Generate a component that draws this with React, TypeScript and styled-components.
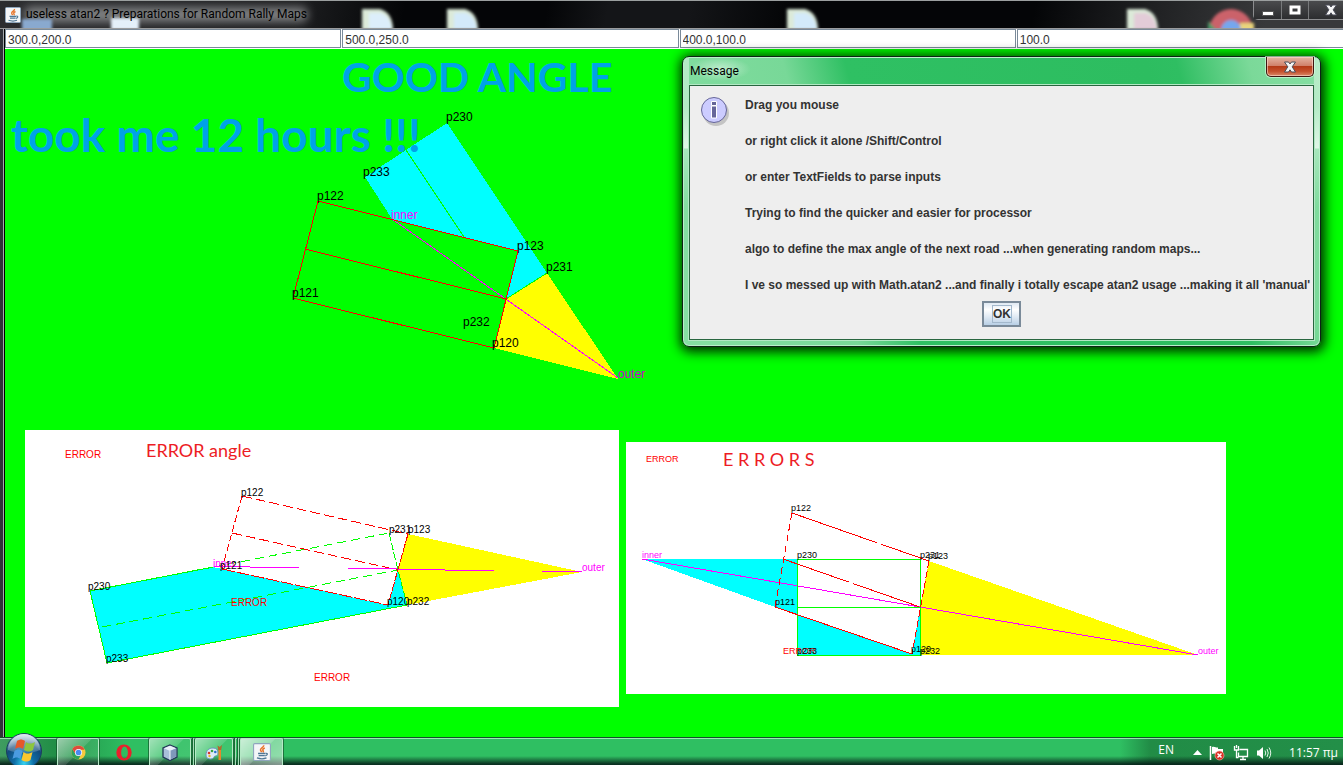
import React from 'react';
import styled, { createGlobalStyle } from 'styled-components';

const ui = "'Open Sans', 'Noto Sans', sans-serif";
const captionFont = "Roboto, 'Open Sans', sans-serif";
const arial = "'Liberation Sans', Arial, sans-serif";
const lato = "Lato, 'Open Sans', sans-serif";

const GlobalStyle = createGlobalStyle`
  *, *::before, *::after { box-sizing: border-box; }
  html, body { margin: 0; padding: 0; background: #000; }
  h1, h2, p { margin: 0; }
  button, input { margin: 0; font: inherit; }
`;

const Desktop = styled.div`
  min-height: 100vh;
  display: flex;
  flex-direction: column;
  overflow: hidden;
`;

const AppWindow = styled.main`
  flex: 1;
  display: flex;
  flex-direction: column;
`;

const TitleBar = styled.header`
  position: relative;
  display: flex;
  align-items: center;
  height: 29px;
  padding-left: 5px;
  border-top: 1px solid #9b9f9f;
  border-bottom: 1px solid #9a9c9e;
  background: linear-gradient(100deg, #2c2d30 0, #1b1c1e 300px, #040507 400px, #040507 540px, #141518 600px, #141518 680px, #040507 780px, #040507 1020px, #1c1d1f 1120px, #38393b 1250px, #38393b 100%);
  overflow: hidden;
`;

const Backdrop = styled.svg`
  position: absolute;
  left: 0;
  top: 0;
  width: 1343px;
  height: 27px;
`;

const Caption = styled.h1`
  position: relative;
  padding: 0 8px 2px 5px;
  font: 12px/22px ${captionFont};
  color: #000;
  white-space: nowrap;
`;

const TitleIcon = styled.span`
  position: relative;
  display: flex;
`;

const WindowButtons = styled.div`
  position: absolute;
  top: 0;
  right: -10px;
  display: flex;
  height: 19px;
  border: 1px solid #8c8d8f;
  border-top: 0;
  border-radius: 0 0 0 5px;
`;

const WindowButton = styled.button<{ $wide?: boolean }>`
  display: flex;
  align-items: center;
  justify-content: center;
  width: ${(p) => (p.$wide ? 44 : 27)}px;
  padding: 0 0 1px;
  border: 0;
  border-left: 1px solid #77797b;
  background: linear-gradient(#4a4b4d, #2c2d2f);
  &:first-child { border-left: 0; }
`;

const Client = styled.div`
  flex: 1;
  display: flex;
  flex-direction: column;
  padding-left: 5px;
  background: linear-gradient(90deg, #303338 0, #303338 3px, #a5a9ac 3px, #a5a9ac 4px, #000 4px, #000 5px);
`;

const Fields = styled.form`
  display: grid;
  grid-template-columns: repeat(4, 1fr);
  gap: 1px;
  height: 20px;
  margin-right: -10px;
  padding-bottom: 1px;
  background: #fff;
`;

const Field = styled.input`
  width: 100%;
  min-width: 0;
  height: 19px;
  padding: 2px 2px 0;
  border: 1px solid #7a8a99;
  border-radius: 0;
  outline: 0;
  background: #fff;
  color: #333;
  font: 12px/16px ${arial};
`;

const Stage = styled.section`
  position: relative;
  flex: 1;
  padding-bottom: 30px;
  background: #0f0;
`;

const Drawing = styled.svg`
  display: block;
  flex: none;
  line, polygon, polyline { shape-rendering: crispEdges; }
`;

const Note = styled.h2<{ $left: number; $top: number; $size: number }>`
  position: absolute;
  left: ${(p) => p.$left}px;
  top: ${(p) => p.$top}px;
  font: bold ${(p) => p.$size}px/52px ${lato};
  color: #00a2e8;
  white-space: nowrap;
`;

const Figures = styled.div`
  display: flex;
  align-items: center;
  gap: 7px;
  padding-left: 20px;
`;

const Label = styled.text<{ $size: number; $color?: string }>`
  font: ${(p) => p.$size}px ${arial};
  fill: ${(p) => p.$color || '#000'};
`;

const FigureTitle = styled.text`
  font: 18px ${lato};
  fill: #ed1c24;
`;

const Dialog = styled.section`
  position: absolute;
  left: 677px;
  top: 7px;
  width: 639px;
  padding: 0 6px 6px;
  border: 1px solid #0c2415;
  border-radius: 7px;
  background:
    linear-gradient(rgba(255,255,255,0.4) 0, rgba(255,255,255,0.4) 50px, rgba(255,255,255,0.75) 91px, rgba(255,255,255,0.3) 92px, rgba(255,255,255,0) 150px) 0 0 / 6px 100% no-repeat,
    linear-gradient(rgba(255,255,255,0.4) 0, rgba(255,255,255,0.4) 50px, rgba(255,255,255,0.75) 91px, rgba(255,255,255,0.3) 92px, rgba(255,255,255,0) 150px) 100% 0 / 6px 100% no-repeat,
    linear-gradient(75deg, #86dfa3 0, #78d898 170px, #2fc063 230px, #2dbd60 520px, #2fbe62 550px, #7bd999 620px, #86dfa3 100%);
  box-shadow: inset 0 0 0 1px #b9f0cb, 1px 2px 12px 3px rgba(0, 20, 0, 0.9);
`;

const DialogHeader = styled.header`
  display: flex;
  justify-content: space-between;
  align-items: flex-start;
  height: 28px;
`;

const DialogTitle = styled.h2`
  padding: 4px 12px 0 1px;
  font: 12px/20px ${captionFont};
  color: #000;
  background: radial-gradient(ellipse at center, rgba(255,255,255,0.5), rgba(255,255,255,0) 70%);
`;

const CloseButton = styled.button`
  display: flex;
  align-items: center;
  justify-content: center;
  width: 48px;
  height: 20px;
  padding: 0;
  border: 1px solid #3f1510;
  border-top: 0;
  border-radius: 0 0 5px 5px;
  background: linear-gradient(#e5b5a4 0, #cf7e68 48%, #b43a18 50%, #c5502c 75%, #d98a68 100%);
  box-shadow: inset 0 0 0 1px rgba(255,220,205,0.6), 0 0 0 1px rgba(220,255,230,0.6);
`;

const DialogBody = styled.div`
  display: flex;
  flex-direction: column;
  align-items: center;
  padding: 10px 10px 12px;
  border: 1px solid #28663f;
  outline: 1px solid #b2e8c4;
  background: #eee;
`;

const MessageRow = styled.div`
  display: flex;
  align-self: stretch;
  gap: 15px;
  svg { flex: none; }
`;

const Lines = styled.div`
  display: flex;
  flex-direction: column;
  gap: 18px;
  font: bold 12px/18px ${arial};
  color: #333;
  white-space: nowrap;
`;

const OkButton = styled.button`
  width: 39px;
  height: 26px;
  margin-top: 7px;
  padding: 2px 0 2px 8px;
  border: 2px solid #7a8a99;
  background: linear-gradient(#dfe9f3 0, #fff 30%, #e3ecf5 60%, #b8cfe5 100%);
  font: bold 12px/16px ${arial};
  color: #333;
  display: flex;
  align-items: center;
`;

const OkFocus = styled.span`
  width: 20px;
  border: 1px solid #a3b8cc;
`;

const Taskbar = styled.footer`
  position: relative;
  display: flex;
  align-items: stretch;
  height: 28px;
  padding-left: 57px;
  border-top: 1px solid #14502b;
  background:
    linear-gradient(rgba(180,240,200,0.8) 0, rgba(180,240,200,0.8) 1px, rgba(0,0,0,0) 1px, rgba(0,0,0,0) 18px, rgba(4,24,22,0.85) 26px),
    linear-gradient(90deg, #3f9c60 0, #218e46 55px, #2fbf62 130px, #2fbf62 1120px, #218c46 1150px, #238f48 100%);
`;

const StartButton = styled.button`
  position: absolute;
  left: 5px;
  top: -6px;
  width: 38px;
  height: 38px;
  padding: 0;
  border: 0;
  background: none;
`;

const TaskButton = styled.button<{ $look: 'plain' | 'open' | 'active'; $width: number; $gap: number }>`
  display: flex;
  align-items: center;
  justify-content: center;
  width: ${(p) => p.$width}px;
  margin-right: ${(p) => p.$gap}px;
  padding: 0;
  border: 1px solid ${(p) => (p.$look === 'plain' ? 'transparent' : '#b5e9c6')};
  border-bottom: 0;
  border-radius: 2px 2px 0 0;
  background: ${(p) =>
    p.$look === 'plain'
      ? 'none'
      : p.$look === 'open'
        ? 'linear-gradient(135deg, rgba(255,255,255,0.55), rgba(255,255,255,0.2) 50%, rgba(255,255,255,0.08) 52%, rgba(255,255,255,0.1))'
        : 'linear-gradient(135deg, rgba(255,255,255,0.75), rgba(255,255,255,0.5) 50%, rgba(255,255,255,0.4) 52%, rgba(255,255,255,0.5))'};
  box-shadow: ${(p) => (p.$look === 'plain' ? 'none' : '0 0 0 1px rgba(15,70,35,0.6)')};
`;

const StackEdge = styled.span`
  width: 2px;
  margin-right: 1px;
  border-right: 1px solid #a8dcb9;
  border-left: 1px solid #1b6a38;
`;

const Tray = styled.div`
  display: flex;
  align-items: center;
  margin-left: auto;
  padding: 2px 5px 0 0;
  color: #fff;
  font: 12px/20px ${ui};
  white-space: nowrap;
`;

const Language = styled.span`
  padding: 0 19px 5px 0;
`;

const Clock = styled.time`
  padding-left: 17px;
`;

const TrayIcons = styled.div`
  display: flex;
  align-items: center;
  gap: 7px;
`;

const JavaIcon = ({ size }: { size: number }) => (
  <svg width={size} height={size} viewBox="0 0 16 16" aria-hidden="true">
    <rect x="0.5" y="0.5" width="15" height="15" rx="1" fill="#f4f6f8" stroke="#8fa6bd" />
    <path d="M9.500 2c.5 1.800-2.800 2.300-2.800 4 0 1 .8 1.400.9 2.200M10.500 4.500c-1.800.7-2.200 1.600-1.500 2.400.4.500.2 1-.2 1.400" fill="none" stroke="#e8762c" strokeWidth="1.400" />
    <path d="M4.500 9.300h6.500M5 11.200h5.500M3.500 13.300c2.500.8 6.500.8 8.500 0M11.300 9.200c2-.3 1.900 1.800-.4 2.100" fill="none" stroke="#4f7896" strokeWidth="1.200" />
  </svg>
);

const CrossIcon = () => (
  <svg width="14" height="12" viewBox="0 0 14 12" aria-hidden="true">
    <path d="M1.500 1h4L7 3l1.500-2h4L9.200 5.800 12.500 11h-4L7 8.800 5.500 11h-4l3.300-5.200z" fill="#f5f5f5" stroke="#4a4c58" strokeWidth="1" />
  </svg>
);

const DocGhost = ({ x, tint }: { x: number; tint: string }) => (
  <g filter="url(#soft)">
    <path d={`M${x} 8h18q13 4 13 21h-31z`} fill="#dcead9" />
    <path d={`M${x + 7} 12h12q10 4 11 17h-23z`} fill={tint} />
  </g>
);

const GlassBackdrop = () => (
  <Backdrop aria-hidden="true" viewBox="0 0 1343 27">
    <defs>
      <filter id="soft" x="-20%" y="-20%" width="140%" height="140%"><feGaussianBlur stdDeviation="1.500" /></filter>
      <filter id="glow" x="-10%" y="-60%" width="120%" height="220%"><feGaussianBlur stdDeviation="5" /></filter>
    </defs>
    <rect x="24" y="6" width="284" height="15" rx="7" fill="#96989a" opacity="0.8" filter="url(#glow)" />
    <path d="M22 18h30v12H22z" fill="#89a9cf" filter="url(#soft)" />
    <path d="M111 17h28v12h-28z" fill="#e4f0fa" filter="url(#soft)" />
    <DocGhost x={362} tint="#dceefb" />
    <DocGhost x={447} tint="#d3eafa" />
    <DocGhost x={787} tint="#d3eafa" />
    <DocGhost x={1127} tint="#e3ccd8" />
    <g filter="url(#soft)">
      <circle cx="1231" cy="30" r="22" fill="#cb626a" />
      <path d="M1208 20l13 14h-13z" fill="#459a67" />
      <path d="M1240 22h14v12h-14z" fill="#e8d47c" />
      <circle cx="1231" cy="29" r="10" fill="#74a7ee" />
    </g>
  </Backdrop>
);

type Mark = [string, number, number, string?];

const Marks = ({ items, size }: { items: Mark[]; size: number }) => (
  <>
    {items.map(([text, x, y, color], i) => (
      <Label key={i} x={x} y={y} $size={size} $color={color}>{text}</Label>
    ))}
  </>
);

const pink = '#f0f';
const red = '#f00';

const goodMarks: Mark[] = [
  ['p230', 446, 121], ['p233', 363, 176], ['p122', 317, 200], ['inner', 391, 219, pink],
  ['p123', 517, 250], ['p231', 546, 271], ['p121', 292, 297], ['p232', 463, 326],
  ['p120', 492, 347], ['outer', 618, 378, '#c0c'],
];

const angleMarks: Mark[] = [
  ['ERROR', 65, 458, red], ['p122', 241, 496], ['p231', 389, 533], ['p123', 408, 533],
  ['inner', 213, 567, pink], ['p121', 220, 569], ['p230', 88, 590], ['p233', 106, 662],
  ['p120', 387, 605], ['p232', 407, 605], ['outer', 582, 571, pink],
  ['ERROR', 231, 606, red], ['ERROR', 314, 681, red],
];

const errorMarks: Mark[] = [
  ['ERROR', 646, 462, red], ['p122', 791, 511], ['p230', 797, 558], ['p231', 920, 558],
  ['p123', 928, 559], ['inner', 642, 558, pink], ['p121', 775, 605], ['ERROR', 783, 654, red],
  ['p233', 797, 654], ['p120', 911, 652], ['p232', 920, 654], ['outer', 1198, 654, pink],
];

const GoodAngle = () => (
  <Drawing width="660" height="381" viewBox="5 49 660 381" role="img" aria-label="Good angle">
    <polygon points="447,123 547,273 506,299 518,251 392,219 365,177" fill="#0ff" />
    <polygon points="506,299 547,273 618,379 494,348" fill="#ff0" />
    <g stroke="#0f0"><line x1="406" y1="150" x2="464" y2="237" /><line x1="506" y1="299" x2="547" y2="273" /></g>
    <line x1="392" y1="219" x2="618" y2="378" stroke="#f0f" />
    <g stroke="#f00" fill="none">
      <polygon points="318,201 518,251 494,348 293,298" />
      <line x1="305" y1="249" x2="506" y2="299" />
    </g>
    <Marks items={goodMarks} size={12} />
  </Drawing>
);

const ErrorAngle = () => (
  <Drawing width="594" height="277" viewBox="25 430 594 277" role="img" aria-label="Error angle">
    <rect x="25" y="430" width="594" height="277" fill="#fff" />
    <polygon points="90,591 213,567 222,569 388,605 398,570 407,605 107,663" fill="#0ff" />
    <polygon points="398,570 408,534 582,572 407,605" fill="#ff0" />
    <g stroke="#0f0" fill="none" strokeDasharray="9 5">
      <line x1="90" y1="591" x2="389" y2="533" />
      <line x1="102" y1="627" x2="398" y2="570" />
    </g>
    <g stroke="#0f0" fill="none">
      <polyline points="213,567 90,591 107,663 407,605" />
      <polyline points="389,533 398,570 407,605" strokeDasharray="8 2" />
    </g>
    <g stroke="#f00" fill="none">
      <line x1="242" y1="496" x2="408" y2="534" strokeDasharray="10 4" />
      <line x1="232" y1="533" x2="398" y2="570" strokeDasharray="10 4" />
      <line x1="222" y1="569" x2="388" y2="605" strokeDasharray="13 2" />
      <line x1="242" y1="496" x2="222" y2="569" strokeDasharray="7 3" />
      <line x1="408" y1="534" x2="388" y2="605" strokeDasharray="9 1" />
    </g>
    <g stroke="#f0f">
      <line x1="214" y1="566.500" x2="250" y2="566.500" />
      <line x1="250" y1="567.500" x2="299" y2="567.500" />
      <line x1="348" y1="568.500" x2="397" y2="568.500" />
      <line x1="398" y1="569.500" x2="445" y2="569.500" />
      <line x1="445" y1="570.500" x2="494" y2="570.500" />
      <line x1="542" y1="571.500" x2="582" y2="571.500" />
    </g>
    <Marks items={angleMarks} size={10} />
    <FigureTitle x="146" y="457">ERROR angle</FigureTitle>
  </Drawing>
);

const Errors = () => (
  <Drawing width="600" height="253" viewBox="626 442 600 253" role="img" aria-label="Errors">
    <rect x="626" y="442" width="600" height="252" fill="#fff" />
    <polygon points="642,559 797,559 797,614 775,607" fill="#0ff" />
    <polygon points="797,614 912,654 920,607 921,655 797,655" fill="#0ff" />
    <polygon points="920,607 929,561 1198,655 921,655" fill="#ff0" />
    <line x1="642" y1="559" x2="1198" y2="655" stroke="#f0f" />
    <g stroke="#0f0" fill="none">
      <polygon points="797.500,559.500 920.500,559.500 920.500,655.500 797.500,655.500" />
      <line x1="797" y1="607.500" x2="921" y2="607.500" />
    </g>
    <g stroke="#f00" fill="none">
      <line x1="792" y1="513" x2="929" y2="561" strokeDasharray="90 4" />
      <line x1="783" y1="559" x2="920" y2="607" strokeDasharray="70 4" />
      <line x1="775" y1="607" x2="912" y2="654" />
      <line x1="792" y1="513" x2="775" y2="607" strokeDasharray="7 4" />
      <line x1="929" y1="561" x2="912" y2="654" strokeDasharray="7 3" />
    </g>
    <Marks items={errorMarks} size={9} />
    <FigureTitle x="723" y="466">E R R O R S</FigureTitle>
  </Drawing>
);

const InfoIcon = () => (
  <svg width="30" height="32" viewBox="0 0 30 32" aria-hidden="true">
    <circle cx="16" cy="17" r="13" fill="#999" opacity="0.5" />
    <circle cx="14" cy="14" r="12.500" fill="#ccf" stroke="#669" />
    <path d="M11.500 5.500h5v4h-5zM11.500 10h5v12h-5z" fill="#669" stroke="#fff" />
  </svg>
);

const StartOrb = () => (
  <svg width="38" height="38" viewBox="0 0 38 38" aria-hidden="true">
    <defs>
      <radialGradient id="orb" cx="50%" cy="85%" r="80%">
        <stop offset="0" stopColor="#36d3f2" /><stop offset="0.350" stopColor="#0f6da5" /><stop offset="0.700" stopColor="#134a7c" /><stop offset="1" stopColor="#7fa8c4" />
      </radialGradient>
      <linearGradient id="orbShine" x1="0" y1="0" x2="0" y2="1"><stop offset="0" stopColor="#fff" stopOpacity="0.750" /><stop offset="1" stopColor="#fff" stopOpacity="0.150" /></linearGradient>
    </defs>
    <circle cx="19" cy="19" r="17.500" fill="url(#orb)" stroke="#1b3f5c" />
    <path d="M3 18a16 16 0 0132 0c-8 4-24 4-32 0z" fill="url(#orbShine)" />
    <path d="M12 9c3-2 5-2 8 0l-2 8c-3-2-5-2-8 0z" fill="#e5572a" />
    <path d="M21 10c3 2 5 2 9 0l-2 8c-3 2-5 2-9 0z" fill="#8cc63f" />
    <path d="M9.500 19c3-2 5-2 8 0l-2 8c-3-2-5-2-8 0z" fill="#4a9be0" />
    <path d="M18.500 20c3 2 5 2 9 0l-2 8c-3 2-5 2-9 0z" fill="#fcc72e" />
  </svg>
);

const ChromeIcon = () => (
  <svg width="15" height="15" viewBox="0 0 16 16" aria-hidden="true">
    <circle cx="8" cy="8" r="7.500" fill="#f7c93d" />
    <path d="M1.500 4.300A7.500 7.500 0 008 15.500L11 9.500 8 12 4.500 9z" fill="#2fa45a" />
    <path d="M1.500 4.300L5 10l3-5h6.500A7.500 7.500 0 001.500 4.300z" fill="#dd4b3e" />
    <circle cx="8" cy="8" r="3.800" fill="#fff" /><circle cx="8" cy="8" r="3" fill="#4a8af0" />
  </svg>
);

const OperaIcon = () => (
  <svg width="16" height="17" viewBox="0 0 16 17" aria-hidden="true">
    <path fillRule="evenodd" d="M8 .5a7.700 8 0 110 16 7.700 8 0 010-16zM8.500 2.500a3.400 6 0 100 12 3.400 6 0 000-12z" fill="#e8202c" />
  </svg>
);

const CubeIcon = () => (
  <svg width="16" height="17" viewBox="0 0 16 17" aria-hidden="true">
    <path d="M8 1l7 3v9l-7 3.500L1 13V4z" fill="#a9bfd9" stroke="#243757" strokeWidth="1.300" />
    <path d="M8 1.800l6 2.400L8 7 2 4.200z" fill="#eaf1f9" /><path d="M8 7l6-2.600v8.200l-6 3z" fill="#7f98bb" /><path d="M8 7v8.600" stroke="#f4f8fc" />
  </svg>
);

const PaintIcon = () => (
  <svg width="18" height="17" viewBox="0 0 18 17" aria-hidden="true">
    <path d="M1 11C1 6 4.500 4 8 4s5 2 5 5-2 3-3 3-1 3-4 3-5-1-5-4z" fill="#dcebf7" stroke="#6b93b8" />
    <circle cx="4" cy="9" r="1.300" fill="#d8382e" /><circle cx="7" cy="7" r="1.300" fill="#37a53f" /><circle cx="10.300" cy="8" r="1.300" fill="#2b72d0" /><circle cx="4.500" cy="12" r="1.200" fill="#eab726" />
    <path d="M13.500 6h2.500v10h-2.500z" fill="#e8862a" /><path d="M12.500 1.500L14.800 3 17 1l-.8 5h-3z" fill="#b4682c" />
  </svg>
);

const FlagIcon = () => (
  <svg width="17" height="16" viewBox="0 0 17 16" aria-hidden="true">
    <path d="M1.500 1v14" stroke="#fff" strokeWidth="1.500" />
    <path d="M3 2c3-1 4 1 6 .5V4h5v6c-4 0-4-1-6-1-2-.500-3-1-5 0z" fill="#fff" />
    <circle cx="10.500" cy="10.500" r="4.500" fill="#d93025" stroke="#f6b5ad" strokeWidth="0.600" />
    <path d="M8.500 8.500l4 4m0-4l-4 4" stroke="#fff" strokeWidth="1.500" />
  </svg>
);

const NetworkIcon = () => (
  <svg width="16" height="16" viewBox="0 0 16 16" aria-hidden="true" fill="none" stroke="#fff">
    <path d="M6.500 4.500h8v7h-9v-4M7 14.500h6M10 12v2M1.500 1v4h4V1M3.500 0v3M3.500 5v7.500h2" strokeWidth="1.300" />
  </svg>
);

const SoundIcon = () => (
  <svg width="16" height="16" viewBox="0 0 16 16" aria-hidden="true">
    <path d="M1 5.500h2L7 2v12l-4-3.500H1z" fill="#fff" />
    <path d="M9 5.500q1.500 2.500 0 5M11 4q2.500 4 0 8M13 2.500q3.500 5.500 0 11" fill="none" stroke="#e3f3e8" />
  </svg>
);

const messageLines = [
  'Drag you mouse',
  'or right click it alone /Shift/Control',
  'or enter TextFields to parse inputs',
  'Trying to find the quicker and easier for processor',
  'algo to define the max angle of the next road ...when generating random maps...',
  "I ve so messed up with Math.atan2 ...and finally i totally escape atan2 usage ...making it all 'manual'",
];

const fieldValues = [
  ['First point', '300.0,200.0'],
  ['Second point', '500.0,250.0'],
  ['Third point', '400.0,100.0'],
  ['Road width', '100.0'],
];

const MessageDialog = () => (
  <Dialog role="dialog" aria-labelledby="dialog-title">
    <DialogHeader>
      <DialogTitle id="dialog-title">Message</DialogTitle>
      <CloseButton type="button" aria-label="Close"><CrossIcon /></CloseButton>
    </DialogHeader>
    <DialogBody>
      <MessageRow>
        <InfoIcon />
        <Lines>{messageLines.map((line) => <p key={line}>{line}</p>)}</Lines>
      </MessageRow>
      <OkButton type="button"><OkFocus>OK</OkFocus></OkButton>
    </DialogBody>
  </Dialog>
);

export default function App() {
  return (
    <Desktop>
      <GlobalStyle />
      <AppWindow>
        <TitleBar>
          <GlassBackdrop />
          <TitleIcon><JavaIcon size={16} /></TitleIcon>
          <Caption>useless atan2 ? Preparations for Random Rally Maps</Caption>
          <WindowButtons>
            <WindowButton type="button" aria-label="Minimize">
              <svg width="12" height="12" viewBox="0 0 12 12"><rect x="0.500" y="7.500" width="11" height="4" fill="#fff" stroke="#555" /></svg>
            </WindowButton>
            <WindowButton type="button" aria-label="Maximize">
              <svg width="12" height="10" viewBox="0 0 12 10"><rect x="2" y="2" width="8" height="6" fill="none" stroke="#fff" strokeWidth="3" /></svg>
            </WindowButton>
            <WindowButton type="button" aria-label="Close window" $wide><CrossIcon /></WindowButton>
          </WindowButtons>
        </TitleBar>
        <Client>
          <Fields onSubmit={(e) => e.preventDefault()}>
            {fieldValues.map(([name, value]) => (
              <Field key={name} type="text" aria-label={name} defaultValue={value} />
            ))}
          </Fields>
          <Stage>
            <GoodAngle />
            <Note $left={337} $top={2} $size={41}>GOOD ANGLE</Note>
            <Note $left={6} $top={60} $size={46}>took me 12 hours !!!</Note>
            <Figures>
              <ErrorAngle />
              <Errors />
            </Figures>
            <MessageDialog />
          </Stage>
        </Client>
      </AppWindow>
      <Taskbar>
        <StartButton type="button" aria-label="Start"><StartOrb /></StartButton>
        <TaskButton type="button" aria-label="Chrome" $look="open" $width={42} $gap={4}><ChromeIcon /></TaskButton>
        <TaskButton type="button" aria-label="Opera" $look="plain" $width={42} $gap={4}><OperaIcon /></TaskButton>
        <TaskButton type="button" aria-label="NetBeans" $look="open" $width={42} $gap={1}><CubeIcon /></TaskButton>
        <StackEdge />
        <TaskButton type="button" aria-label="Paint" $look="open" $width={38} $gap={1}><PaintIcon /></TaskButton>
        <StackEdge />
        <StackEdge />
        <TaskButton type="button" aria-label="Java" $look="active" $width={43} $gap={0}><JavaIcon size={18} /></TaskButton>
        <Tray>
          <Language>EN</Language>
          <TrayIcons>
            <svg width="9" height="5" viewBox="0 0 9 5" aria-hidden="true"><path d="M4.500 0L9 5H0z" fill="#fff" /></svg>
            <FlagIcon />
            <NetworkIcon />
            <SoundIcon />
          </TrayIcons>
          <Clock>11:57 πμ</Clock>
        </Tray>
      </Taskbar>
    </Desktop>
  );
}
